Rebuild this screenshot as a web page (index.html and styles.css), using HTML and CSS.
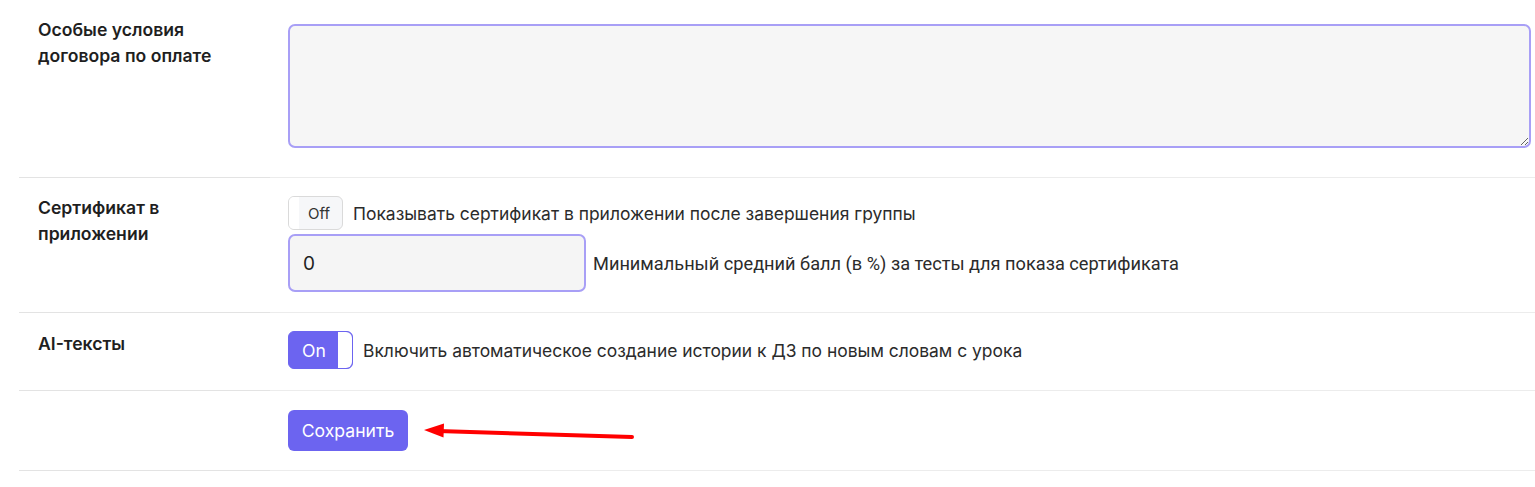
FILE: index.html
```html
<!DOCTYPE html>
<html lang="ru">
<head>
<meta charset="utf-8">
<title>Настройки</title>
<link rel="stylesheet" href="styles.css">
</head>
<body>
<div class="form">
  <div class="row row-first">
    <div class="label">Особые условия договора по оплате</div>
    <div class="field">
      <textarea class="textarea"></textarea>
    </div>
  </div>
  <div class="row">
    <div class="label">Сертификат в приложении</div>
    <div class="field stack">
      <div class="line">
        <span class="toggle toggle-off"><span class="knob"></span><span class="toggle-text">Off</span></span>
        <span class="desc">Показывать сертификат в приложении после завершения группы</span>
      </div>
      <div class="line">
        <input class="input" type="text" value="0">
        <span class="desc desc-roboto">Минимальный средний балл (в %) за тесты для показа сертификата</span>
      </div>
    </div>
  </div>
  <div class="row">
    <div class="label">AI-тексты</div>
    <div class="field">
      <div class="line line-wide">
        <span class="toggle toggle-on"><span class="toggle-text">On</span><span class="knob"></span></span>
        <span class="desc">Включить автоматическое создание истории к ДЗ по новым словам с урока</span>
      </div>
    </div>
  </div>
  <div class="row row-last">
    <div class="label"></div>
    <div class="field">
      <button class="btn" type="button">Сохранить</button>
    </div>
  </div>
</div>
<svg class="arrow" width="1535" height="487" viewBox="0 0 1535 487">
  <line x1="632" y1="437" x2="438" y2="431" stroke="#ff0000" stroke-width="4" stroke-linecap="round"/>
  <polygon points="424,430 444,423.5 443.5,437.5" fill="#ff0000"/>
</svg>
</body>
</html>
```
FILE: styles.css
```css
html, body {
  margin: 0;
  padding: 0;
  background: #ffffff;
}
body {
  font-family: Inter, "Noto Sans", sans-serif;
  color: #2b2b2b;
  position: relative;
  width: 1535px;
  height: 487px;
  overflow: hidden;
}
.form {
  margin-left: 19px;
}
.row {
  display: grid;
  grid-template-columns: 251px 1fr;
}
.row > .label {
  padding: 18px 0 0 19px;
  font-size: 17.6px;
  line-height: 26px;
  font-weight: 600;
  color: #1f1f1f;
  border-bottom: 1px solid #e3e3e3;
}
.row > .field {
  padding: 18px 4px 20px 18px;
  border-bottom: 1px solid #ececec;
}
.row-first > .label {
  padding-top: 17px;
  padding-right: 40px;
}
.row-first > .field {
  padding-top: 24px;
  padding-bottom: 29px;
}
.row-last > .field {
  padding-top: 19px;
  padding-bottom: 19px;
}
.row:nth-child(3) > .field {
  padding-bottom: 21px;
}
.row:nth-child(2) > .label {
  padding-top: 17px;
  padding-right: 40px;
}
.textarea {
  display: block;
  box-sizing: border-box;
  width: 100%;
  height: 124px;
  margin: 0;
  background: #f6f6f6;
  border: 2px solid #a89ff6;
  border-radius: 7px;
  font-family: inherit;
  font-size: 16px;
  outline: none;
}
.stack {
  display: flex;
  flex-direction: column;
  gap: 4px;
}
.line {
  display: flex;
  align-items: center;
  gap: 10px;
}
.toggle {
  box-sizing: border-box;
  display: inline-flex;
  align-items: center;
  border-radius: 6px;
  flex: none;
}
.toggle-off {
  width: 55px;
  height: 34px;
  border: 1px solid #dadada;
  background: #f6f7f9;
  overflow: hidden;
}
.toggle-off .knob {
  width: 10px;
  height: 100%;
  background: #ffffff;
}
.toggle-off .toggle-text {
  flex: 1;
  text-align: center;
  font-size: 15px;
  color: #333;
  padding-right: 3px;
}
.toggle-on {
  width: 65px;
  height: 38px;
  background: #6c64f0;
  border: 1px solid #6c64f0;
  padding: 0;
  justify-content: space-between;
}
.toggle-on .toggle-text {
  flex: 1;
  text-align: center;
  color: #ffffff;
  font-size: 17.6px;
  padding-left: 1px;
}
.toggle-on .knob {
  width: 14px;
  height: 36px;
  background: #ffffff;
  border-radius: 0 6px 6px 0;
}
.desc {
  font-size: 17.45px;
  color: #2b2b2b;
  white-space: nowrap;
}
.desc-roboto {
  font-family: Roboto, "Liberation Sans", sans-serif;
  font-size: 18.2px;
  margin-left: -3px;
}
.input {
  box-sizing: border-box;
  width: 298px;
  height: 58px;
  margin: 0;
  padding: 0 13px;
  background: #f5f5f5;
  border: 2px solid #a89ff6;
  border-radius: 7px;
  font-family: inherit;
  font-size: 19px;
  color: #222;
  outline: none;
}
.btn {
  box-sizing: border-box;
  height: 41px;
  width: 120px;
  padding: 0;
  background: #6c64f0;
  color: #ffffff;
  border: none;
  border-radius: 6px;
  font-family: inherit;
  font-size: 17.6px;
  cursor: pointer;
}
.arrow {
  position: absolute;
  left: 0;
  top: 0;
  pointer-events: none;
}
```
